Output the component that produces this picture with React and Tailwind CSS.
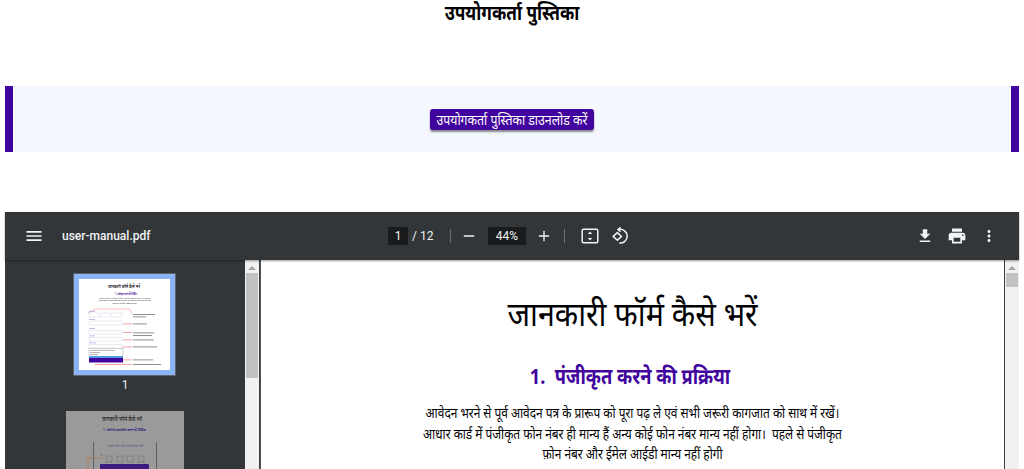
import { Minus, Plus } from 'lucide-react';

const ToolIcon = ({ d, className = 'w-6 h-6' }) => (
  <svg className={className} viewBox="0 0 24 24" fill="#f1f3f4">
    <path d={d} />
  </svg>
);

const FitIcon = () => (
  <svg className="w-[18px] h-[18px]" viewBox="0 0 18 18" fill="none" stroke="#f1f3f4" strokeWidth="1.5">
    <rect x="1.2" y="2.2" width="15.6" height="13.6" rx="1.2" />
    <path d="M9 4.5L6.8 7h4.4zM9 13.5L6.8 11h4.4z" fill="#f1f3f4" stroke="none" />
  </svg>
);

const RotateIcon = () => (
  <svg className="w-[18px] h-[18px]" viewBox="0 0 18 18" fill="none" stroke="#f1f3f4" strokeWidth="1.5">
    <path d="M7 2.4A6.9 6.9 0 1 1 7.2 16" />
    <path d="M8.6 0.4L6 2.6l2.6 2.2" />
    <path d="M1.2 9.4L5.4 5.6l4 3.8-4 3.8z" />
  </svg>
);

const ThumbOne = () => (
  <svg className="w-[91px] h-[91px] block" viewBox="0 0 91 91" fontFamily="'Noto Sans', sans-serif" textAnchor="middle">
    <rect width="91" height="91" fill="#fff" />
    <text x="45" y="8.5" fontSize="4.6" fontWeight="600" fill="#111" textLength="32" lengthAdjust="spacingAndGlyphs">जानकारी फॉर्म कैसे भरें</text>
    <text x="47" y="15.5" fontSize="3" fontWeight="600" fill="#42049e" textLength="22" lengthAdjust="spacingAndGlyphs">1. पंजीकृत करने की प्रक्रिया</text>
    <g fontSize="2" fill="#333">
      <text x="45.5" y="19.5" textLength="51" lengthAdjust="spacingAndGlyphs">आवेदन भरने से पूर्व आवेदन पत्र के प्रारूप को पूरा पढ़ ले एवं सभी जरूरी कागजात</text>
      <text x="45.5" y="22" textLength="52" lengthAdjust="spacingAndGlyphs">आधार कार्ड में पंजीकृत फोन नंबर ही मान्य हैं अन्य कोई फोन नंबर मान्य नहीं होगा</text>
      <text x="45.5" y="24.5" textLength="24" lengthAdjust="spacingAndGlyphs">फ़ोन नंबर और ईमेल आईडी मान्य नहीं</text>
    </g>
    <path d="M9 34l8-4h34l2 5" fill="none" stroke="#f3a0a0" strokeWidth="0.7" />
    <g fill="#fff" stroke="#d8d8e8" strokeWidth="0.5">
      <rect x="10" y="34" width="11" height="4" />
      <rect x="22" y="34" width="10" height="4" />
      <rect x="33" y="34" width="10" height="4" />
      <rect x="10" y="42" width="33" height="4" />
      <rect x="10" y="51.5" width="33" height="3.5" />
      <rect x="10" y="58.5" width="33" height="3.5" />
      <rect x="10" y="65.5" width="33" height="3.5" />
    </g>
    <g fill="#b9a6dc">
      <rect x="10" y="32" width="6" height="0.8" />
      <rect x="10" y="40" width="6" height="0.8" />
      <rect x="10" y="49" width="6" height="0.8" />
      <rect x="10" y="56.5" width="6" height="0.8" />
      <rect x="10" y="63.5" width="7" height="0.8" />
    </g>
    <g fill="#f08a8a">
      <rect x="44" y="44.5" width="9" height="0.8" />
      <rect x="44" y="53" width="9" height="0.8" />
      <rect x="44" y="60.5" width="9" height="0.8" />
      <rect x="44" y="67.5" width="9" height="0.8" />
      <rect x="44" y="80.5" width="9" height="0.8" />
      <rect x="16" y="85" width="37" height="0.8" />
    </g>
    <g fill="#777">
      <rect x="54" y="35" width="22" height="0.8" />
      <rect x="54" y="37.5" width="13" height="0.8" />
      <rect x="54" y="44.5" width="14" height="0.8" />
      <rect x="54" y="53.5" width="21" height="0.8" />
      <rect x="54" y="56" width="19" height="0.8" />
      <rect x="54" y="60.5" width="21" height="0.8" />
      <rect x="54" y="67.5" width="24" height="0.8" />
      <rect x="54" y="80.5" width="20" height="0.8" />
      <rect x="54" y="85" width="28" height="0.8" />
    </g>
    <rect x="10" y="69.5" width="34" height="8" fill="#fff" stroke="#888" strokeWidth="0.4" />
    <g fill="#999">
      <rect x="11" y="71" width="25" height="0.7" />
      <rect x="11" y="73" width="10" height="0.7" />
      <rect x="11" y="75" width="8" height="0.7" />
    </g>
    <rect x="10" y="77" width="34" height="2" fill="#4d9be0" />
    <rect x="10" y="79" width="34" height="4.5" fill="#42049e" />
  </svg>
);

const ThumbTwo = () => (
  <svg className="w-[118px] h-[80px] block" viewBox="0 0 118 80" fontFamily="'Noto Sans', sans-serif" textAnchor="middle">
    <rect width="118" height="80" fill="#9a9a9b" />
    <text x="56" y="10" fontSize="5.6" fontWeight="600" fill="#333" textLength="40" lengthAdjust="spacingAndGlyphs">जानकारी फॉर्म कैसे भरें</text>
    <text x="58.5" y="20" fontSize="3.6" fontWeight="600" fill="#2c1577" textLength="43" lengthAdjust="spacingAndGlyphs">1. ओटीपी सत्यापित करने की प्रक्रिया</text>
    <rect x="27" y="31" width="1" height="49" fill="#606060" />
    <rect x="90" y="31" width="1" height="49" fill="#606060" />
    <text x="59" y="36" fontSize="2.6" fill="#5c5580" textLength="36" lengthAdjust="spacingAndGlyphs">अपने फोन को सत्यापित करें</text>
    <rect x="34" y="43.5" width="3" height="1" fill="#777" />
    <g fill="none" stroke="#7c7c7c" strokeWidth="0.8">
      <rect x="40" y="45" width="6" height="6" />
      <rect x="51" y="45" width="6" height="6" />
      <rect x="61" y="45" width="6" height="6" />
      <rect x="72" y="45" width="6" height="6" />
    </g>
    <path d="M37 47H22v33" fill="none" stroke="#b07a50" strokeWidth="1" />
    <rect x="34" y="53" width="49" height="12" rx="1" fill="#3a1c80" />
  </svg>
);

export default function App() {
  return (
    <div className="h-[469px] w-[1024px] overflow-hidden bg-white flex flex-col font-['Noto_Sans',sans-serif]">
      <h1 className="h-[28px] leading-[26px] text-center text-[20px] font-bold text-black whitespace-nowrap scale-x-[0.86]">उपयोगकर्ता पुस्तिका</h1>

      <div className="mt-[58px] mx-[5px] h-[66px] bg-[#f5f7ff] border-x-[8px] border-[#42049e] flex items-center justify-center">
        <button className="h-[21px] w-[164px] rounded-[3px] bg-[#42049e] text-white leading-[21px] whitespace-nowrap shadow-[0_2px_2px_rgba(0,0,0,0.45)]">
          <span className="block -mx-[8px] text-center text-[14px] scale-x-[0.88]">उपयोगकर्ता पुस्तिका डाउनलोड करें</span>
        </button>
      </div>

      <div className="mt-[60px] mx-[5px] flex-1 min-h-0 flex flex-col bg-[#525659]">
        <div className="h-[48px] shrink-0 bg-[#323639] flex items-center text-[#f1f3f4] font-['Roboto',sans-serif] shadow-[0_1px_2px_rgba(0,0,0,0.4)] relative">
          <div className="w-[380px] flex items-center pl-[19px] shrink-0">
            <ToolIcon className="w-[20px] h-[20px]" d="M3 18h18v-2H3v2zm0-5h18v-2H3v2zm0-7v2h18V6H3z" />
            <span className="ml-[18px] text-[12px] font-medium">user-manual.pdf</span>
          </div>
          <div className="flex items-center text-[12px]">
            <span className="w-[20px] h-[18px] ml-[3px] bg-[#191b1c] text-center leading-[18px]">1</span>
            <span className="ml-[4px] w-[21px] whitespace-nowrap">/ 12</span>
            <span className="ml-[17px] w-px h-[14px] bg-[#6b6f72]" />
            <Minus className="ml-[10px] w-[16px] h-[16px]" strokeWidth={2} />
            <span className="ml-[11px] w-[38px] h-[18px] bg-[#191b1c] text-center leading-[18px]">44%</span>
            <Plus className="ml-[10px] w-[16px] h-[16px]" strokeWidth={2} />
            <span className="ml-[12px] w-px h-[14px] bg-[#6b6f72]" />
            <span className="ml-[16px]"><FitIcon /></span>
            <span className="ml-[13px]"><RotateIcon /></span>
          </div>
          <div className="ml-auto flex items-center pr-[21px]">
            <ToolIcon className="w-[18px] h-[18px]" d="M19 9h-4V3H9v6H5l7 7 7-7zM5 18v2h14v-2H5z" />
            <ToolIcon className="ml-[13px] w-[20px] h-[20px]" d="M19 8H5c-1.66 0-3 1.34-3 3v6h4v4h12v-4h4v-6c0-1.66-1.34-3-3-3zm-3 11H8v-5h8v5zm3-7c-.55 0-1-.45-1-1s.45-1 1-1 1 .45 1 1-.45 1-1 1zm-1-9H6v4h12V3z" />
            <ToolIcon className="ml-[13px] w-[18px] h-[18px]" d="M12 8c1.1 0 2-.9 2-2s-.9-2-2-2-2 .9-2 2 .9 2 2 2zm0 2c-1.1 0-2 .9-2 2s.9 2 2 2 2-.9 2-2-.9-2-2-2zm0 6c-1.1 0-2 .9-2 2s.9 2 2 2 2-.9 2-2-.9-2-2-2z" />
          </div>
        </div>

        <div className="flex-1 min-h-0 flex overflow-hidden">
          <div className="w-[240px] shrink-0 bg-[#323639] flex flex-col items-center pt-[14px]">
            <div className="w-[101px] h-[101px] border-[5px] border-[#8ab4f8] outline outline-1 outline-[#5f6368] -ml-[1px]">
              <ThumbOne />
            </div>
            <span className="mt-[3px] text-[12px] leading-[14px] text-[#e8eaed] font-['Roboto',sans-serif]">1</span>
            <div className="mt-[19px] -ml-[1px]"><ThumbTwo /></div>
          </div>

          <div className="w-[15px] shrink-0 bg-[#f1f1f1] flex flex-col items-center border-r border-[#3a3d40]">
            <span className="mt-[6px] w-0 h-0 border-x-[4px] border-x-transparent border-b-[4px] border-b-[#a3a3a3]" />
            <span className="mt-[3px] w-[12px] h-[105px] bg-[#c1c1c1]" />
          </div>

          <div className="w-[1px] shrink-0 bg-[#525659]" />

          <div className="w-[743px] shrink-0 bg-white text-center text-black pt-[31px] whitespace-nowrap">
            <div className="text-[34px] leading-[44px] scale-x-[0.895]">जानकारी फॉर्म कैसे भरें</div>
            <div className="mt-[25px] pr-[6px] text-[22px] leading-[30px] font-bold text-[#42049e] scale-x-[0.83]">1.&nbsp; पंजीकृत करने की प्रक्रिया</div>
            <div className="mt-[13px] text-[14px] leading-[20.5px] scale-x-[0.85]">
              <div>आवेदन भरने से पूर्व आवेदन पत्र के प्रारूप को पूरा पढ़ ले एवं सभी जरूरी कागजात को साथ में रखें।</div>
              <div>आधार कार्ड में पंजीकृत फोन नंबर ही मान्य हैं अन्य कोई फोन नंबर मान्य नहीं होगा।&nbsp; पहले से पंजीकृत</div>
              <div>फ़ोन नंबर और ईमेल आईडी मान्य नहीं होगी</div>
            </div>
          </div>

          <div className="flex-1 bg-[#f1f1f1] flex flex-col items-center border-l border-[#3a3d40]">
            <span className="mt-[6px] w-0 h-0 border-x-[4px] border-x-transparent border-b-[4px] border-b-[#a3a3a3]" />
            <span className="mt-[3px] w-[12px] h-[14px] bg-[#c1c1c1]" />
          </div>
        </div>
      </div>
    </div>
  );
}
